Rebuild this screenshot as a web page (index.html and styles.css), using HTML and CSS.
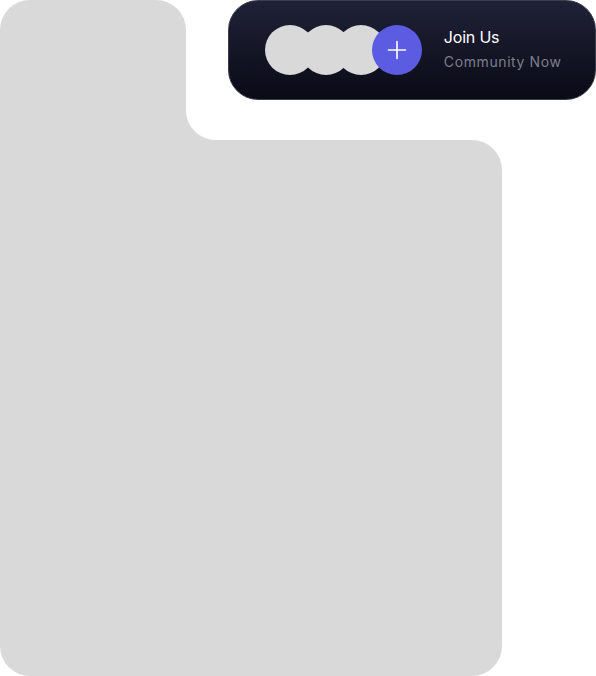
FILE: index.html
```html
<!DOCTYPE html>
<html>
<head>
<meta charset="utf-8">
<link rel="stylesheet" href="styles.css">
</head>
<body>
<div class="scene">
  <div class="top-row">
    <div class="shape-top"></div>
    <div class="join-card">
      <div class="avatars">
        <span class="avatar"></span>
        <span class="avatar"></span>
        <span class="avatar"></span>
        <span class="avatar avatar-add">
          <svg width="20" height="20" viewBox="0 0 20 20"><path d="M10 1.5v17M1.5 10h17" stroke="#fff" stroke-width="1.6" stroke-linecap="round" fill="none"/></svg>
        </span>
      </div>
      <div class="join-text">
        <div class="join-title">Join Us</div>
        <div class="join-sub">Community Now</div>
      </div>
    </div>
  </div>
  <div class="shape-bottom"></div>
</div>
</body>
</html>
```
FILE: styles.css
```css
html, body {
  margin: 0;
  padding: 0;
  background: #ffffff;
}
.scene {
  width: 596px;
  height: 676px;
  display: flex;
  flex-direction: column;
  font-family: "Inter", "Noto Sans", sans-serif;
}
.top-row {
  display: flex;
  align-items: flex-start;
  gap: 42px;
  height: 140px;
}
.shape-top {
  position: relative;
  width: 186px;
  height: 140px;
  background: #d9d9d9;
  border-radius: 30px 30px 0 0;
  flex: none;
}
.shape-top::after {
  content: "";
  position: absolute;
  left: 186px;
  bottom: 0;
  width: 30px;
  height: 30px;
  background: radial-gradient(circle at 30px 0, transparent 29.5px, #d9d9d9 30.5px);
}
.shape-bottom {
  width: 502px;
  height: 536px;
  background: #d9d9d9;
  border-radius: 0 30px 30px 30px;
}
.join-card {
  box-sizing: border-box;
  width: 368px;
  height: 100px;
  border: 1px solid #3c3e4d;
  border-radius: 30px;
  background: linear-gradient(180deg, #1f2137 0%, #0a0b16 100%);
  display: flex;
  align-items: center;
  padding-left: 36px;
  gap: 22px;
  flex: none;
}
.avatars {
  display: flex;
}
.avatar {
  width: 50px;
  height: 50px;
  border-radius: 50%;
  background: #d9d9d9;
  display: flex;
  align-items: center;
  justify-content: center;
}
.avatar + .avatar {
  margin-left: -14.4px;
}
.avatar-add {
  background: #5b5ce2;
}
.join-text {
  display: flex;
  flex-direction: column;
  gap: 5px;
  margin-top: -2px;
}
.join-title {
  color: #ffffff;
  font-size: 16px;
  line-height: 20px;
  letter-spacing: -0.2px;
}
.join-sub {
  color: #7c7e8b;
  font-size: 14px;
  line-height: 20px;
  letter-spacing: 0.6px;
}
```
